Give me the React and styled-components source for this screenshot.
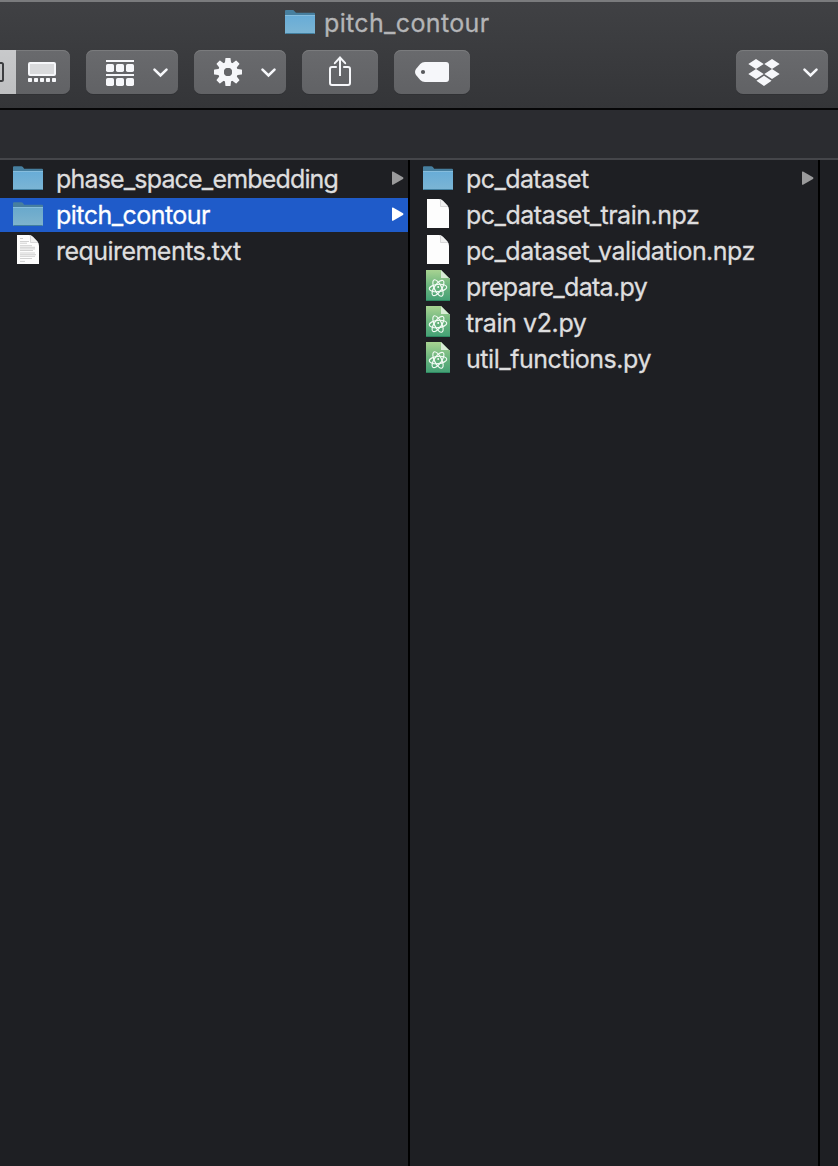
import React from "react";
import styled, { createGlobalStyle } from "styled-components";

const GlobalStyle = createGlobalStyle`
  * { box-sizing: border-box; }
  body { margin: 0; background: #1e1f23; font-family: Inter, "Liberation Sans", sans-serif; }
  svg { display: block; flex: none; }
`;

const Window = styled.div`
  width: 838px;
  height: 1166px;
  overflow: hidden;
  display: flex;
  flex-direction: column;
`;

const Header = styled.header`
  flex: none;
  height: 110px;
  border-top: 2px solid #7a7b7d;
  border-bottom: 2px solid #060607;
  background: linear-gradient(#404144, #343538);
`;

const Title = styled.div`
  display: flex;
  height: 48px;
  padding: 7px 0 0 285px;
  gap: 9px;
`;

const Label = styled.span`
  display: block;
  font-size: 25px;
  line-height: 30px;
  white-space: nowrap;
  color: ${(p) => p.$color || "#dededf"};
  letter-spacing: ${(p) => p.$spacing}px;
  -webkit-text-stroke: 0.3px currentColor;
`;

const TitleLabel = styled(Label)`
  margin-top: -1px;
`;

const Toolbar = styled.div`
  display: flex;
  gap: 16px;
  padding-right: 10px;
`;

const ToolButton = styled.div`
  width: ${(p) => p.$width}px;
  height: 44px;
  flex: none;
  border-radius: ${(p) => (p.$joined ? "0 7px 7px 0" : "7px")};
  margin-left: ${(p) => (p.$end ? "auto" : "0")};
  background: linear-gradient(#696a6d, #616265);
  box-shadow: inset 0 1px 0 #7a7b7d, 0 1px 0 #303134;
  overflow: hidden;
  display: flex;
`;

const ActiveSegment = styled.div`
  width: 16px;
  height: 44px;
  background: linear-gradient(#c8c9cb, #bebfc1);
`;

const PathBar = styled.div`
  flex: none;
  height: 50px;
  background: #2b2c30;
  border-bottom: 2px solid #45464a;
`;

const Columns = styled.main`
  flex: 1;
  display: flex;
  background: #1e1f23;
`;

const Column = styled.section`
  width: 410px;
  border-right: 2px solid #000;
  padding-top: 2px;
  display: flex;
  flex-direction: column;
  gap: 2px;
`;

const Row = styled.div`
  height: 34px;
  display: flex;
  padding: 0 4px 0 12px;
  background: ${(p) => (p.$selected ? "#1f5bc9" : "transparent")};
`;

const IconSlot = styled.div`
  width: 44px;
  flex: none;
`;

const RowLabel = styled(Label)`
  flex: 1;
  padding-top: 2px;
`;

const Disclosure = styled.svg`
  margin-top: 8px;
`;

function Folder({ dim }) {
  const fill = dim ? "folderDim" : "folder";
  return (
    <svg width="32" height="32" viewBox="0 0 32 32">
      <defs>
        <linearGradient id={fill} x1="0" y1="0" x2="0" y2="1">
          <stop offset="0" stopColor={dim ? "#68a8cc" : "#67acd7"} />
          <stop offset="1" stopColor={dim ? "#7fb4cd" : "#7cb5d4"} />
        </linearGradient>
      </defs>
      <path d="M1 9V5.2Q1 4.2 2 4.2H9.3Q10.2 4.2 10.9 5L12.2 6.8H30Q31 6.8 31 7.8V9Z" fill="#477f9f" />
      <path d="M1 9H31V27Q31 28 30 28H2Q1 28 1 27Z" fill={`url(#${fill})`} />
      <path d="M1 9.5H31" stroke="#86bddd" strokeWidth="1" />
      <path d="M1.5 27.5H30.5" stroke="#427f9f" strokeWidth="1" />
    </svg>
  );
}

function TitleFolder() {
  return (
    <svg width="30" height="26" viewBox="1 3 30 26">
      <defs>
        <linearGradient id="titleFolder" x1="0" y1="0" x2="0" y2="1">
          <stop offset="0" stopColor="#67acd7" />
          <stop offset="1" stopColor="#7cb5d4" />
        </linearGradient>
      </defs>
      <path d="M1 9V5Q1 4 2 4H9.3L12 6.8H30Q31 6.8 31 7.8V9Z" fill="#477f9f" />
      <path d="M1 9H31V27Q31 28 30 28H2Q1 28 1 27Z" fill="url(#titleFolder)" />
      <path d="M1 9.5H31" stroke="#86bddd" />
      <path d="M1.5 27.5H30.5" stroke="#427f9f" />
    </svg>
  );
}

function Page({ text }) {
  return (
    <svg width="32" height="34" viewBox="0 0 32 34">
      <path d="M5 1H17Q19.5 1 21 2.7L25.5 7.6Q27 9.3 27 12V30H5Z" fill="#fdfdfd" />
      <path d="M18.5 1.2V8.5H26" fill="#f1f1f1" stroke="#cfcfd0" strokeWidth=".8" />
      {text && (
        <g stroke="#bdbdbd" strokeWidth=".7">
          <path d="M8 4.5H11M8 7.5H17M8 9.2H15M8 11.7H20M8 13.3H23M8 14.9H23M8 16.5H21M8 19H23M8 20.7H24M8 22.3H23M8 24.5H20M8 27.4H13" />
        </g>
      )}
    </svg>
  );
}

function AtomPage() {
  return (
    <svg width="32" height="34" viewBox="0 0 32 34">
      <defs>
        <linearGradient id="atomFill" x1="0" y1="0" x2="0" y2="1">
          <stop offset="0" stopColor="#a8d392" />
          <stop offset=".5" stopColor="#6cb57e" />
          <stop offset="1" stopColor="#43a075" />
        </linearGradient>
      </defs>
      <path d="M4 0H19L28 9V31H4Z" fill="url(#atomFill)" />
      <path d="M4 30.5H28" stroke="#2d8861" />
      <path d="M19 0V8H28V9Z" fill="#d9edd7" />
      <g fill="none" stroke="#f3fbf5" strokeWidth="1.15">
        <ellipse cx="16" cy="18" rx="8.8" ry="3.6" transform="rotate(-6 16 18)" />
        <ellipse cx="16" cy="18" rx="9" ry="3.6" transform="rotate(63 16 18)" />
        <ellipse cx="16" cy="18" rx="9" ry="3.6" transform="rotate(125 16 18)" />
      </g>
      <circle cx="16.2" cy="17" r=".9" fill="#fff" />
    </svg>
  );
}

function Arrow({ selected }) {
  return (
    <Disclosure width="14" height="18" viewBox="0 0 14 18">
      <path d="M2 2.1Q2 1.1 3 1.5L13 7.3Q14 8.1 13 8.9L3 14.7Q2 15.1 2 14.2Z" fill={selected ? "#fff" : "#9a9a9b"} />
    </Disclosure>
  );
}

const Chevron = ({ x }) => (
  <path d={`M${x - 6} 19.6L${x} 25.5L${x + 6} 19.6`} fill="none" stroke="#f6f7fa" strokeWidth="2.6" strokeLinecap="round" strokeLinejoin="miter" />
);

const GalleryIcon = () => (
  <svg width="54" height="44" fill="#f6f7fa">
    <rect x="13" y="13" width="26" height="12" rx="1" fill="#d9dadc" stroke="#f6f7fa" strokeWidth="2" />
    {[12, 18, 24, 30, 36].map((x) => <rect key={x} x={x} y="28" width="4" height="4" rx=".8" />)}
  </svg>
);

const GroupIcon = () => (
  <svg width="92" height="44" fill="#f6f7fa">
    <path d="M20 10H48V12H20ZM20 24H48V26H20Z" />
    {[14, 28].map((y) => [20, 30, 40].map((x) => <rect key={`${x}-${y}`} x={x} y={y} width="8" height="8" rx="1.7" />))}
    <Chevron x={74.5} />
  </svg>
);

const GearIcon = () => (
  <svg width="92" height="44">
    <g transform="translate(34 22)">
      <g fill="#f6f7fa">
        {[0, 45, 90, 135, 180, 225, 270, 315].map((a) => (
          <path key={a} d="M-3.2 -8L-2.6 -13.4Q-2.5 -14 -1.9 -14H1.9Q2.5 -14 2.6 -13.4L3.2 -8Z" transform={`rotate(${a})`} />
        ))}
      </g>
      <circle r="6.9" fill="none" stroke="#f6f7fa" strokeWidth="6" />
      <circle r="4" fill="#656669" />
    </g>
    <Chevron x={74.5} />
  </svg>
);

const ShareIcon = () => (
  <svg width="76" height="44" fill="none" stroke="#f6f7fa" strokeWidth="2">
    <path d="M34.8 17H30Q28 17 28 19V33Q28 35 30 35H46Q48 35 48 33V19Q48 17 46 17H41.2M38 26V8" />
    <path d="M32.8 13.2L38 7.5L43.2 13.2" strokeLinecap="round" />
  </svg>
);

const TagIcon = () => (
  <svg width="76" height="44">
    <path d="M31 12H52Q55 12 55 15V29Q55 32 52 32H31Q28 32 26.2 30L22 25Q20 22 22 19L26.2 14Q28 12 31 12Z" fill="#f6f7fa" />
    <circle cx="29" cy="22" r="2.1" fill="#58595c" />
  </svg>
);

const DropboxIcon = () => (
  <svg width="92" height="44" fill="#f6f7fa">
    <path d="M20 9L27.7 14L20 19L12.3 14ZM36 9L43.7 14L36 19L28.3 14ZM20 19L27.7 24L20 29L12.3 24ZM36 19L43.7 24L36 29L28.3 24ZM28 25.7L35.6 30.8L28 36L20.4 30.8Z" />
    <Chevron x={74.5} />
  </svg>
);

const leftItems = [
  { name: "phase_space_embedding", kind: "folder", arrow: true, spacing: -0.83 },
  { name: "pitch_contour", kind: "folder", arrow: true, selected: true, spacing: -0.54 },
  { name: "requirements.txt", kind: "text", spacing: -0.54 },
];

const rightItems = [
  { name: "pc_dataset", kind: "folder", arrow: true, spacing: -0.6 },
  { name: "pc_dataset_train.npz", kind: "page", spacing: -0.5 },
  { name: "pc_dataset_validation.npz", kind: "page", spacing: -0.54 },
  { name: "prepare_data.py", kind: "atom", spacing: -0.68 },
  { name: "train v2.py", kind: "atom", spacing: -0.4 },
  { name: "util_functions.py", kind: "atom", spacing: -0.46 },
];

function FileIcon({ item }) {
  if (item.kind === "folder") return <Folder dim={item.selected} />;
  if (item.kind === "atom") return <AtomPage />;
  return <Page text={item.kind === "text"} />;
}

function FileColumn({ items }) {
  return (
    <Column>
      {items.map((item) => (
        <Row key={item.name} $selected={item.selected}>
          <IconSlot><FileIcon item={item} /></IconSlot>
          <RowLabel $spacing={item.spacing} $color={item.selected ? "#fff" : undefined}>{item.name}</RowLabel>
          {item.arrow && <Arrow selected={item.selected} />}
        </Row>
      ))}
    </Column>
  );
}

export default function App() {
  return (
    <Window>
      <GlobalStyle />
      <Header>
        <Title>
          <TitleFolder />
          <TitleLabel $color="#b4b5b7" $spacing={0.35}>pitch_contour</TitleLabel>
        </Title>
        <Toolbar>
          <ToolButton $width={70} $joined>
            <ActiveSegment>
              <svg width="16" height="44"><rect x="-12" y="13" width="15" height="18" rx="1.5" fill="none" stroke="#3d3e41" strokeWidth="2" /></svg>
            </ActiveSegment>
            <GalleryIcon />
          </ToolButton>
          <ToolButton $width={92}><GroupIcon /></ToolButton>
          <ToolButton $width={92}><GearIcon /></ToolButton>
          <ToolButton $width={76}><ShareIcon /></ToolButton>
          <ToolButton $width={76}><TagIcon /></ToolButton>
          <ToolButton $width={92} $end><DropboxIcon /></ToolButton>
        </Toolbar>
      </Header>
      <PathBar />
      <Columns>
        <FileColumn items={leftItems} />
        <FileColumn items={rightItems} />
      </Columns>
    </Window>
  );
}
